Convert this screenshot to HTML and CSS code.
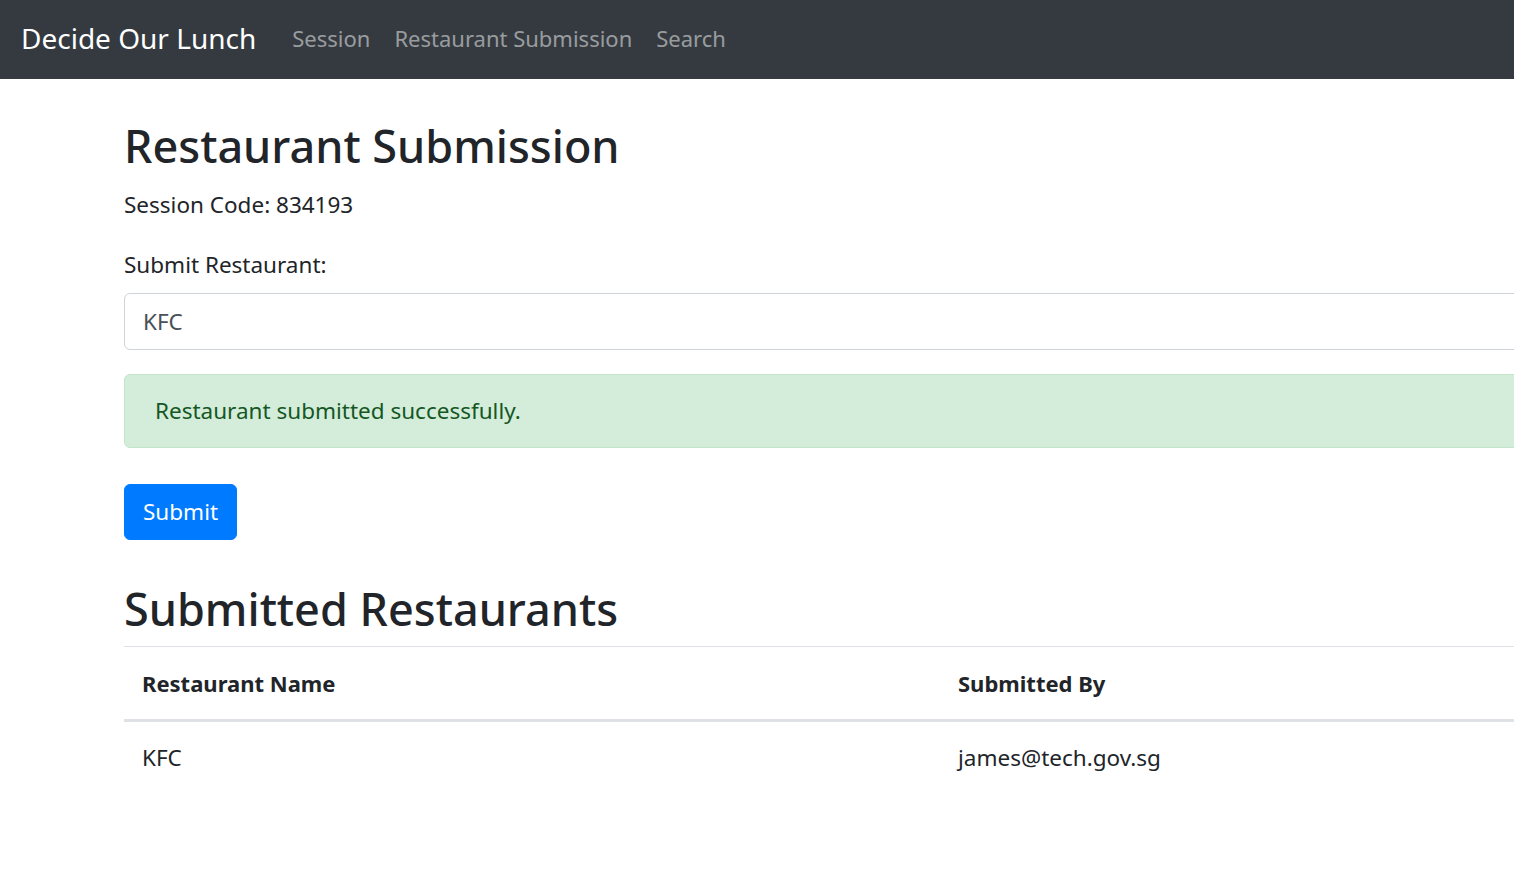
FILE: index.html
```html
<!DOCTYPE html>
<html lang="en">
<head>
<meta charset="utf-8">
<title>Decide Our Lunch</title>
<link rel="stylesheet" href="styles.css">
</head>
<body>
<nav class="navbar">
  <a class="brand" href="#">Decide Our Lunch</a>
  <a class="nav-link" href="#">Session</a>
  <a class="nav-link" href="#">Restaurant Submission</a>
  <a class="nav-link" href="#">Search</a>
</nav>
<main class="container">
  <h1 class="title">Restaurant Submission</h1>
  <p class="code">Session Code: 834193</p>
  <form class="form">
    <div class="form-group">
      <label class="label" for="rest">Submit Restaurant:</label>
      <input class="input" id="rest" type="text" value="KFC">
    </div>
    <div class="alert">Restaurant submitted successfully.</div>
    <button class="btn" type="button">Submit</button>
  </form>
  <h2 class="subtitle">Submitted Restaurants</h2>
  <table class="table">
    <thead>
      <tr><th class="col-name">Restaurant Name</th><th>Submitted By</th></tr>
    </thead>
    <tbody>
      <tr><td>KFC</td><td>james@tech.gov.sg</td></tr>
    </tbody>
  </table>
</main>
</body>
</html>
```
FILE: styles.css
```css
* { box-sizing: border-box; }
html, body { margin: 0; padding: 0; }
body {
  font-family: "Noto Sans", "Open Sans", sans-serif;
  font-size: 22.5px;
  line-height: 36px;
  color: #212529;
  background: #fff;
  overflow: hidden;
  width: 1514px;
}
.navbar {
  display: flex;
  align-items: center;
  height: 79px;
  background: #343a40;
  padding-left: 21px;
}
.brand {
  color: #fff;
  text-decoration: none;
  font-size: 28px;
  line-height: 45px;
  margin-right: 24px;
  padding-bottom: 2px;
}
.nav-link {
  color: rgba(255,255,255,.5);
  text-decoration: none;
  padding: 0 12px 3px;
  font-size: 22px;
}
.container {
  padding-left: 124px;
  width: 1800px;
}
.title {
  font-size: 45px;
  line-height: 72px;
  font-weight: 500;
  margin: 31px 0 5px;
}
.code { margin: 0 0 24px; }
.form-group { margin-bottom: 24px; }
.label { display: inline-block; margin-bottom: 10px; }
.input {
  display: block;
  width: 100%;
  height: 57px;
  padding: 9px 18px;
  font: inherit;
  color: #495057;
  border: 1.5px solid #ced4da;
  border-radius: 6px;
  background: #fff;
}
.alert {
  background: #d4edda;
  border: 1.5px solid #c3e6cb;
  color: #155724;
  border-radius: 6px;
  padding: 18px 30px;
  margin-bottom: 36px;
}
.btn {
  display: inline-block;
  height: 56px;
  padding: 9px 18px;
  font: inherit;
  color: #fff;
  background: #007bff;
  border: 1.5px solid #007bff;
  border-radius: 6px;
}
.subtitle {
  font-size: 45px;
  line-height: 58px;
  font-weight: 500;
  margin: 40px 0 8px;
}
.table {
  width: 1665px;
  border-collapse: collapse;
}
.table th, .table td {
  text-align: left;
  padding: 18px;
  border-top: 1.5px solid #dee2e6;
  vertical-align: top;
}
.table th { font-weight: 700; font-size: 22px; }
.table thead th { border-bottom: 3px solid #dee2e6; }
.col-name { width: 816px; }
```
